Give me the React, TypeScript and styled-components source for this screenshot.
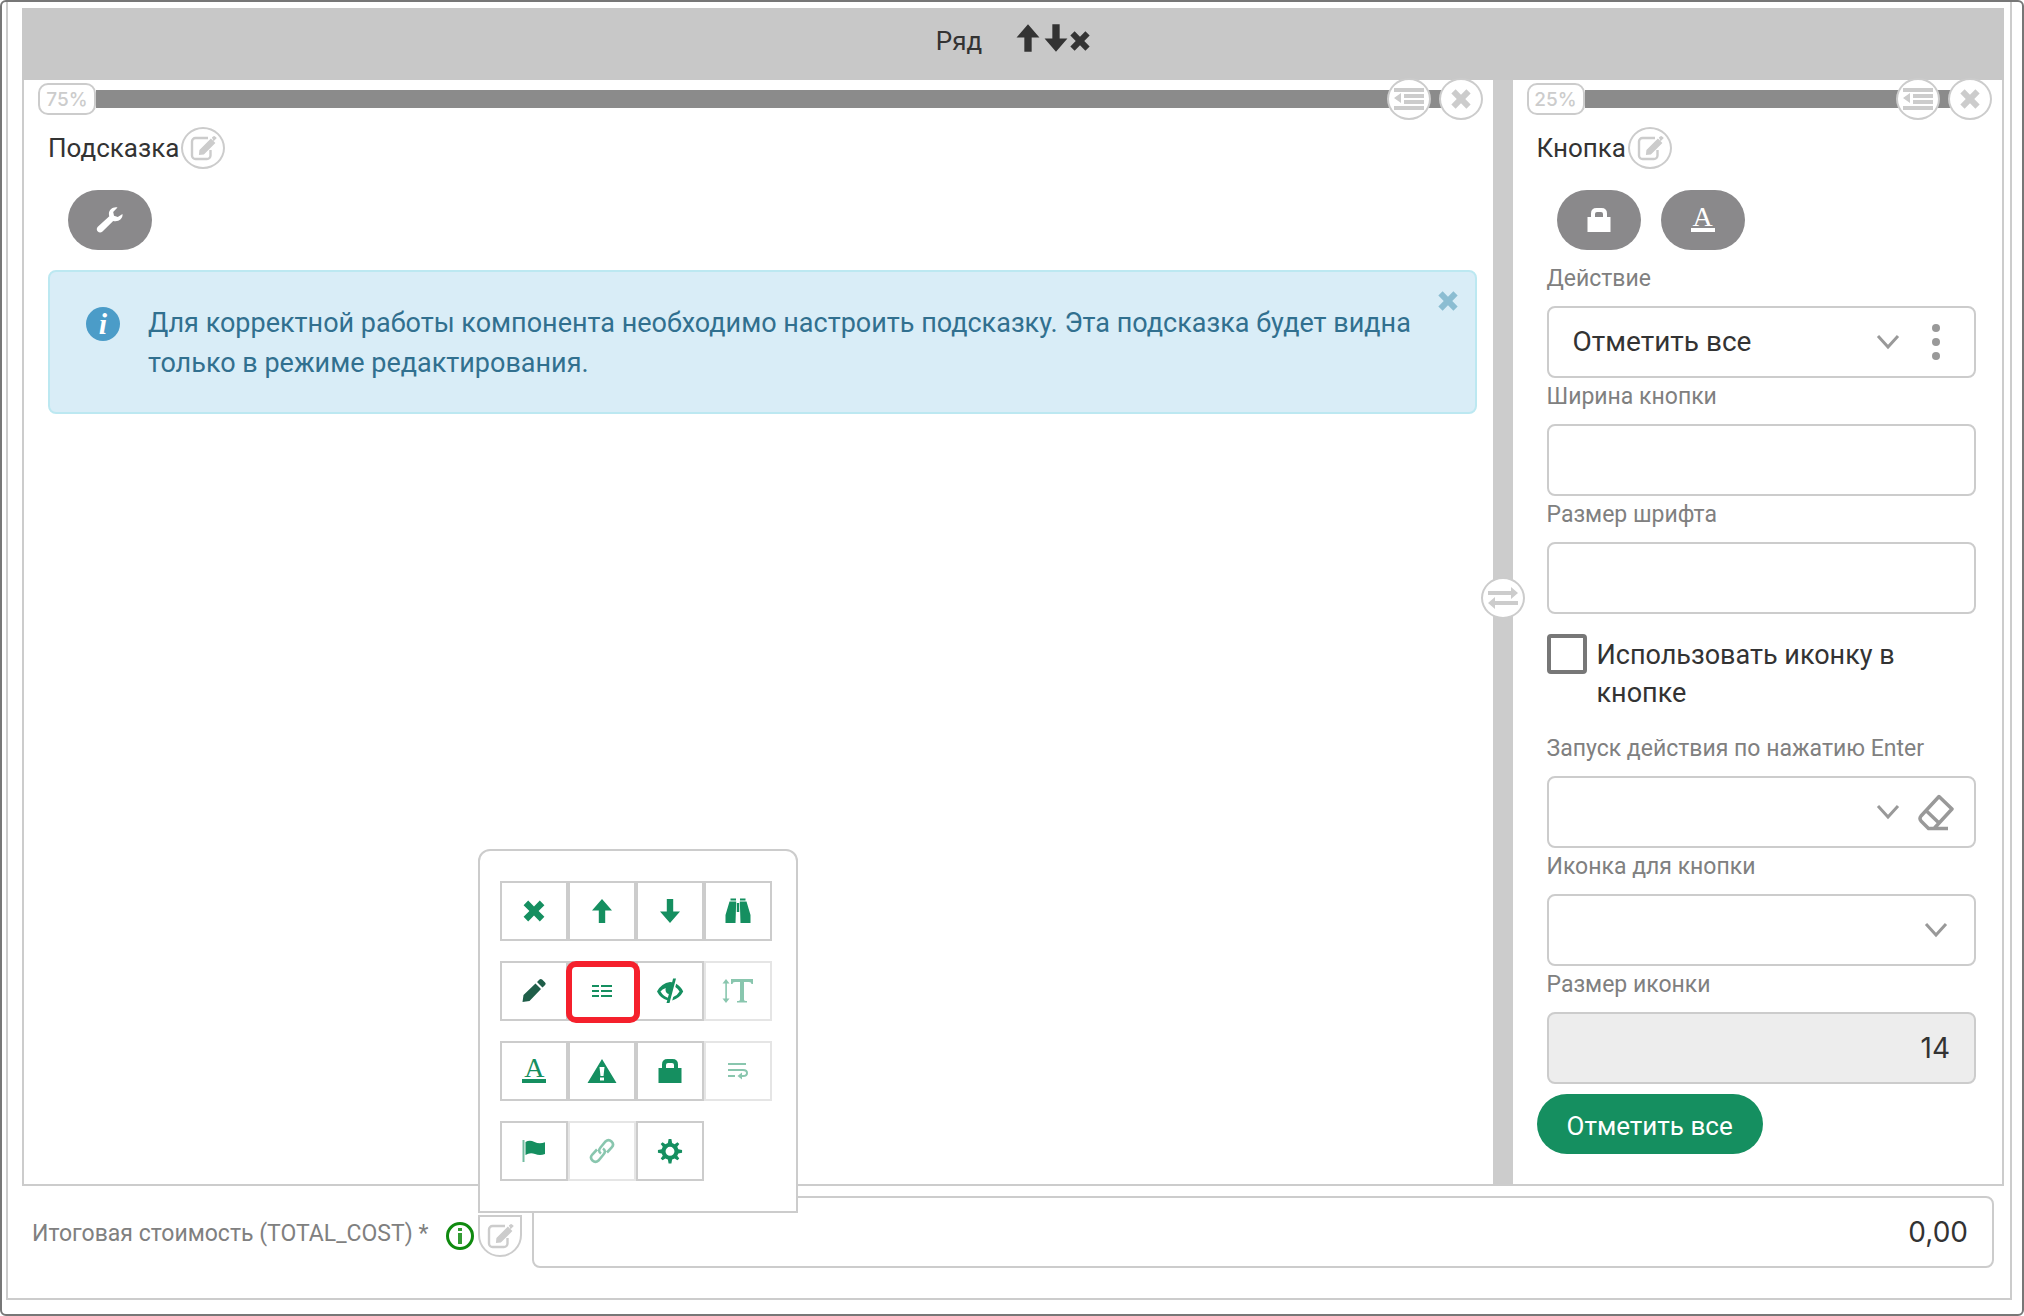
import React, { useState } from "react";
import styled, { createGlobalStyle, css } from "styled-components";

const GREEN = "#158f60";
const GREY = "#cccccc";

const GlobalStyle = createGlobalStyle`
  *, *::before, *::after { box-sizing: border-box; }
  body {
    margin: 0;
    background: #fff;
    color: #333;
    font-family: Roboto, "Liberation Sans", sans-serif;
    font-size: 26px;
    line-height: 38px;
  }
  button, input, select { font: inherit; color: inherit; margin: 0; }
  button { padding: 0; border: 0; background: none; cursor: pointer; }
  svg { display: block; flex: none; }
`;

const Page = styled.main`
  min-height: 100vh;
  border: 2px solid #777;
  border-radius: 6px;
  padding: 0 10px 14px 4px;
`;

const Frame = styled.div`
  border: 2px solid ${GREY};
  border-top: 0;
  padding: 6px 6px 30px 14px;
`;

const RowHeader = styled.header`
  display: flex;
  justify-content: center;
  align-items: center;
  gap: 32px;
  height: 72px;
  padding-bottom: 6px;
  background: #c8c8c8;
`;

const RowTitle = styled.h2`
  margin: 0;
  font-size: 26px;
  font-weight: 400;
`;

const HeaderActions = styled.div`
  display: flex;
  align-items: flex-end;
  padding-bottom: 6px;
`;

const HeaderButton = styled.button<{ $narrow?: boolean }>`
  display: flex;
  justify-content: center;
  width: ${(p) => (p.$narrow ? "20px" : "28px")};
`;

const BareButton = styled.button`
  display: grid;
  place-items: center;
`;

const RowBody = styled.div`
  display: grid;
  grid-template-columns: minmax(0, 3fr) 20px minmax(0, 1fr);
  border: 2px solid ${GREY};
  border-top: 0;
`;

const Column = styled.section`
  padding-bottom: 30px;
`;

const ColumnBar = styled.div`
  position: relative;
  display: flex;
  align-items: center;
  margin-top: -2px;
  padding: 0 10px 0 14px;
`;

const Percent = styled.span`
  min-width: 58px;
  height: 32px;
  border: 2px solid ${GREY};
  border-radius: 10px;
  color: ${GREY};
  font-family: Inter, sans-serif;
  font-size: 19px;
  font-weight: 500;
  line-height: 29px;
  text-align: center;
`;

const Track = styled.span<{ $short?: boolean }>`
  flex: ${(p) => (p.$short ? "0 0 20px" : "1")};
  height: 18px;
  margin: 0 -6px 0 ${(p) => (p.$short ? "-6px" : "0")};
  background: #8b8b8b;
`;

const RoundButton = styled.button<{ $attached?: boolean }>`
  position: relative;
  display: grid;
  place-items: center;
  flex: none;
  width: 44px;
  height: 42px;
  border: 2px solid ${GREY};
  border-radius: ${(p) => (p.$attached ? "0 0 22px 22px" : "50%")};
  background: #fff;
  color: ${GREY};
`;

const Splitter = styled.div`
  position: relative;
  background: ${GREY};
`;

const SplitterHandle = styled.div`
  position: absolute;
  top: 45%;
  left: 50%;
  transform: translateX(-50%);
`;

const Content = styled.div`
  padding: 6px 16px 0 24px;
`;

const TitleRow = styled.div`
  display: flex;
  align-items: center;
  gap: 2px;
  height: 44px;
`;

const Title = styled.h3`
  margin: 0;
  font-size: 26px;
  font-weight: 400;
`;

const Tools = styled.div`
  display: flex;
  gap: 20px;
  padding: 20px;
`;

const ToolButton = styled.button`
  display: grid;
  place-items: center;
  width: 84px;
  height: 60px;
  border-radius: 30px;
  background: #8a898b;
  color: #fff;
`;

const Alert = styled.div`
  display: grid;
  grid-template-columns: 34px minmax(0, 1fr) 26px;
  column-gap: 28px;
  padding: 31px 14px 29px 36px;
  border: 2px solid #bce8f1;
  border-radius: 8px;
  background: #d9edf7;
  color: #31708f;
  font-size: 27px;
  line-height: 40px;
`;

const AlertText = styled.p`
  margin: 0 -12px 0 0;
`;

const InfoMark = styled.span`
  display: grid;
  place-items: center;
  width: 34px;
  height: 34px;
  margin-top: 4px;
  border-radius: 50%;
  background: #4b9cc8;
  color: #fff;
  font: italic 700 30px/34px "Liberation Serif", serif;
`;

const AlertClose = styled(BareButton)`
  align-self: start;
  margin-top: -15px;
  color: #8bbdd2;
`;

const Fields = styled.div`
  padding: 10px;
  margin-top: -20px;
`;

const Field = styled.div`
  display: flex;
  flex-direction: column;
`;

const FieldLabel = styled.label`
  padding-top: 2px;
  height: 46px;
  line-height: 34px;
  font-size: 23px;
  color: #808080;
`;

const box = css`
  height: 72px;
  border: 2px solid ${GREY};
  border-radius: 8px;
  background: #fff;
  font-size: 28px;
`;

const TextBox = styled.input`
  ${box}
  width: 100%;
  min-width: 0;
  padding: 0 24px;
  font-family: Inter, sans-serif;
  text-align: right;
  &:disabled { background: #ededed; color: #333; opacity: 1; }
`;

const SelectBox = styled.div`
  ${box}
  display: flex;
  align-items: center;
  padding-right: 14px;
`;

const Select = styled.select`
  flex: 1;
  min-width: 0;
  height: 100%;
  padding: 0 0 0 24px;
  border: 0;
  background: transparent;
  appearance: none;
  font-size: 28px;
`;

const Slot = styled.span`
  display: grid;
  place-items: center;
  width: 48px;
  color: #999;
  pointer-events: none;
`;

const SlotButton = styled(BareButton)`
  width: 48px;
  height: 48px;
  color: #999;
`;

const CheckRow = styled.div`
  display: grid;
  grid-template-columns: 40px minmax(0, 1fr);
  column-gap: 10px;
  align-items: start;
  padding: 20px 0 18px;
`;

const CheckLabel = styled.label`
  padding-top: 2px;
  font-size: 27px;
`;

const Checkbox = styled.input`
  appearance: none;
  width: 40px;
  height: 40px;
  margin: 0;
  border: 4px solid #777;
  border-radius: 4px;
  &:checked { background: ${GREEN}; }
`;

const PrimaryButton = styled.button`
  height: 60px;
  padding: 4px 30px 0;
  border-radius: 30px;
  background: ${GREEN};
  color: #fff;
  font-size: 26px;
`;

const TotalRow = styled.div`
  display: flex;
  align-items: center;
  gap: 10px;
  padding: 10px 10px 0 10px;
`;

const TotalLabel = styled.label`
  flex: none;
  padding-top: 4px;
  margin-right: 8px;
  font-size: 23px;
  color: #808080;
`;

const TotalTools = styled.div`
  display: flex;
  align-items: center;
  gap: 4px;
  padding-top: 8px;
  color: #0f8a0f;
`;

const PopupAnchor = styled.div`
  position: relative;
`;

const Popup = styled.div`
  position: absolute;
  z-index: 1;
  left: 0;
  bottom: calc(100% + 2px);
  display: grid;
  grid-template-columns: repeat(4, 68px);
  row-gap: 20px;
  width: 320px;
  padding: 30px 20px;
  border: 2px solid ${GREY};
  border-radius: 12px 12px 0 0;
  background: #fff;
`;

const PopupButton = styled.button<{ $dark?: boolean; $marked?: boolean }>`
  position: relative;
  display: grid;
  place-items: center;
  height: 60px;
  border: 2px solid ${GREY};
  background: #fff;
  color: ${(p) => (p.$dark ? "#1f5e49" : GREEN)};
  &:disabled { opacity: 0.5; cursor: default; }
  ${(p) =>
    p.$marked &&
    css`
      z-index: 1;
      &::after {
        content: "";
        position: absolute;
        inset: -2px -6px -4px -4px;
        border: 6px solid #f5202c;
        border-radius: 10px;
      }
    `}
`;

const TextColor = styled.span`
  width: 24px;
  height: 24px;
  border-bottom: 4px solid currentColor;
  font: 400 28px/18px "Liberation Serif", serif;
  text-align: center;
`;

type GlyphProps = { size?: number; children: React.ReactNode };
const Glyph = ({ size = 28, children }: GlyphProps) => (
  <svg width={size} height={size} viewBox="0 0 28 28" fill="currentColor" aria-hidden="true">
    {children}
  </svg>
);

const Cross = ({ size = 28 }: { size?: number }) => (
  <Glyph size={size}>
    <path d="M8.200 3.600 14 9.400l5.800-5.800 4.600 4.600L18.600 14l5.800 5.800-4.600 4.600L14 18.600l-5.800 5.800-4.600-4.600L9.400 14 3.600 8.200z" />
  </Glyph>
);
const ArrowUp = ({ size = 28 }: { size?: number }) => (
  <Glyph size={size}><path d="M14 2l10 11.500H17.200V26h-6.400V13.500H4z" /></Glyph>
);
const ArrowDown = ({ size = 28 }: { size?: number }) => (
  <Glyph size={size}><path d="M14 26 4 14.500h6.800V2h6.400v12.500H24z" /></Glyph>
);
const Outdent = () => (
  <svg width="32" height="24" viewBox="0 0 32 24" fill="currentColor" aria-hidden="true">
    <path d="M1 1h30v4H1zM11 7h20v4H11zM11 13h20v4H11zM1 19h30v4H1zM1 11l7-5v10z" />
  </svg>
);
const Edit = () => (
  <Glyph>
    <path
      d="M19 4H6.500A3.500 3.500 0 0 0 3 7.500v14A3.500 3.500 0 0 0 6.500 25H18a3.500 3.500 0 0 0 3.500-3.500V16"
      fill="none" stroke="currentColor" strokeWidth="2.400"
    />
    <path d="M11 15.500 22.500 4l4.500 4.500L15.500 20 10.500 20.500zM23.500 3l1.200-1.200q1-.8 2 0l1.700 1.700-3.200 3.200z" transform="translate(-.6 .6)" />
  </Glyph>
);
const Wrench = () => (
  <Glyph>
    <path d="M26.500 8 21.800 11l-3.800-1.200-.8-3.800L21.500 1.500c-4.300-1-8.600 2-8.600 6.500 0 1 .2 1.600.4 2.300L1.800 20.800c-1.500 1.600-1.200 3.500 0 4.800s3.200 1.400 4.700 0l10.700-10.700c5 1.300 9.900-2 9.300-6.900z" />
  </Glyph>
);
const Lock = () => (
  <Glyph>
    <path d="M2.500 11H6V7.500Q6 2 11.500 2h5Q22 2 22 7.500V11h3.500v15h-23zM10 11h8V8q0-2-2-2h-4q-2 0-2 2z" fillRule="evenodd" />
  </Glyph>
);
const Swap = () => (
  <svg width="30" height="22" viewBox="0 0 30 22" fill="currentColor" aria-hidden="true">
    <path d="M0 4h23V0l7 6-7 6V8H0zM30 18H7v4l-7-6 7-6v4h23z" />
  </svg>
);
const Chevron = () => (
  <svg width="24" height="16" viewBox="0 0 24 16" fill="none" stroke="currentColor" strokeWidth="3" aria-hidden="true">
    <path d="M2 2l10 11L22 2" />
  </svg>
);
const Dots = () => (
  <svg width="10" height="38" viewBox="0 0 10 38" fill="currentColor" aria-hidden="true">
    <circle cx="5" cy="5" r="4" /><circle cx="5" cy="19" r="4" /><circle cx="5" cy="33" r="4" />
  </svg>
);
const Eraser = () => (
  <svg width="38" height="38" viewBox="0 0 38 38" fill="none" stroke="currentColor" strokeWidth="3.500" strokeLinejoin="round" aria-hidden="true">
    <path d="M31 35.500H11.500L4 28q-2-2.500 0-5L22 3.500 35 16 17.500 35M9 17.500 22 30" />
  </svg>
);
const Binoculars = () => (
  <Glyph>
    <path d="M6.500 1.500h5.500v2H6.500zM16 1.500h5.500v2H16zM5.500 4.500h6.700l-.7 21.500H1.500V18zM15.800 4.500h6.700L26.500 18v8H16.500zM12.800 6h2.400v9h-2.400z" />
  </Glyph>
);
const Pencil = () => (
  <Glyph><path d="M2.500 25 3.500 18 15.500 6.500l5.500 5.500L9.500 24zM17 5l2.500-2.500q1.300-1 2.600 0l3 3q1.300 1.300 0 2.600L22.500 10.500z" /></Glyph>
);
const List = () => (
  <svg width="20" height="12" viewBox="0 0 20 12" fill="currentColor" aria-hidden="true">
    <path d="M0 0h7v2H0zM9 0h11v2H9zM0 5h7v2H0zM9 5h11v2H9zM0 10h7v2H0zM9 10h11v2H9z" />
  </svg>
);
const EyeClosed = () => (
  <Glyph>
    <path d="M20 1.500 13.500 26h-3l.8-2.800Q4.500 21.500 1 14.500 5.500 6 14 5q1 0 2.100.2l1-3.700zM12.500 18.500l.3-1.500q-3.300-.8-3.300-4.500 0-.7.300-1.500Q6 12 4.500 14.500 7.500 19.300 11.800 20.800z" fillRule="evenodd" />
    <path d="M20.200 6.800Q24.700 9.200 27.200 14.500q-3.500 6.800-11 9l1-3.500q4.300-1.600 6.300-5.500-1.500-2.800-4.200-4.500z" />
  </Glyph>
);
const TextHeight = () => (
  <svg width="32" height="26" viewBox="0 0 32 26" fill="currentColor" aria-hidden="true">
    <path d="M3.300 4h1.600v18H3.300zM4 1l3.500 4.500h-7zM4 25l-3.500-4.500h7zM9 1h22v5h-1.500q0-2-2.500-2h-5v17.500q0 1.500 3 1.500v1.500H15V23q3 0 3-1.500V4h-5q-2.500 0-2.500 2H9z" />
  </svg>
);
const Warning = () => (
  <svg width="30" height="26" viewBox="0 0 30 26" fill="currentColor" aria-hidden="true">
    <path d="M15 1l14.500 24H.5zM12.500 9l1 9h3l1-9zM13 19.500v3h4v-3z" fillRule="evenodd" />
  </svg>
);
const Wrap = () => (
  <svg width="22" height="18" viewBox="0 0 22 18" fill="none" stroke="currentColor" strokeWidth="2" aria-hidden="true">
    <path d="M1 2h18M1 8h15q4 0 4 3t-4 3h-4M1 14h7" />
    <path d="M15 10.500v7L10.500 14z" fill="currentColor" stroke="none" />
  </svg>
);
const Flag = () => (
  <Glyph>
    <path d="M2.500 3h2v22h-2z" opacity=".6" />
    <path d="M5.500 5q4-2.500 9 0t10.500.2V17q-5 2-10 0t-9.500 1z" />
  </Glyph>
);
const Link = () => (
  <Glyph>
    <path
      d="M13 16.500q-3.500-2.500-.5-6l5-6q3-2.800 6 0t.2 6l-4.700 5M15 11.500q3.500 2.500.5 6l-5 6q-3 2.800-6 0t-.2-6l4.700-5"
      fill="none" stroke="currentColor" strokeWidth="2.600"
    />
  </Glyph>
);
const Cog = () => (
  <Glyph size={26}>
    <path d="M12.500 1h3l.8 4.500 2.700 1.200L22 4.500l2 2L21.800 9.500 23 12l4 .8v3l-4 .8-1.200 2.600L24 22l-2 2-3-2-2.700 1.200-.8 4.300h-3l-.8-4.300L9 22l-3 2-2-2 2.200-2.800L5 16.600l-4-.8v-3l4-.8 1.200-2.500L4 6.500l2-2 3 2.200 2.700-1.200zM14 9.500a4.800 4.800 0 1 0 0 9.600 4.800 4.800 0 0 0 0-9.600z" fillRule="evenodd" />
  </Glyph>
);
const InfoCircle = () => (
  <svg width="28" height="28" viewBox="0 0 28 28" aria-hidden="true">
    <circle cx="14" cy="14" r="12.500" fill="none" stroke="currentColor" strokeWidth="3" />
    <path d="M12 6h4v3h-4zM12 11h4v11h-4z" fill="currentColor" opacity=".85" />
  </svg>
);

type ColumnHeadProps = { percent: string };
const ColumnHead = ({ percent }: ColumnHeadProps) => (
  <ColumnBar>
    <Percent>{percent}</Percent>
    <Track />
    <RoundButton type="button" aria-label="Отступ"><Outdent /></RoundButton>
    <Track $short />
    <RoundButton type="button" aria-label="Удалить колонку"><Cross size={26} /></RoundButton>
  </ColumnBar>
);

type PopupAction = { label: string; icon: React.ReactNode; disabled?: boolean; dark?: boolean; marked?: boolean };
const popupActions: PopupAction[] = [
  { label: "Удалить", icon: <Cross /> },
  { label: "Вверх", icon: <ArrowUp /> },
  { label: "Вниз", icon: <ArrowDown /> },
  { label: "Найти", icon: <Binoculars /> },
  { label: "Редактировать", icon: <Pencil />, dark: true },
  { label: "Список", icon: <List />, marked: true },
  { label: "Скрыть", icon: <EyeClosed /> },
  { label: "Высота текста", icon: <TextHeight />, disabled: true },
  { label: "Цвет текста", icon: <TextColor>A</TextColor> },
  { label: "Предупреждение", icon: <Warning /> },
  { label: "Блокировка", icon: <Lock /> },
  { label: "Перенос", icon: <Wrap />, disabled: true },
  { label: "Флаг", icon: <Flag /> },
  { label: "Ссылка", icon: <Link />, disabled: true },
  { label: "Настройки", icon: <Cog /> },
];

export default function App() {
  const [useIcon, setUseIcon] = useState(false);
  return (
    <>
      <GlobalStyle />
      <Page>
        <Frame>
          <RowHeader>
            <RowTitle>Ряд</RowTitle>
            <HeaderActions>
              <HeaderButton type="button" aria-label="Ряд вверх"><ArrowUp size={32} /></HeaderButton>
              <HeaderButton type="button" aria-label="Ряд вниз"><ArrowDown size={32} /></HeaderButton>
              <HeaderButton $narrow type="button" aria-label="Удалить ряд"><Cross size={26} /></HeaderButton>
            </HeaderActions>
          </RowHeader>
          <RowBody>
            <Column>
              <ColumnHead percent="75%" />
              <Content>
                <TitleRow>
                  <Title>Подсказка</Title>
                  <RoundButton type="button" aria-label="Изменить подсказку"><Edit /></RoundButton>
                </TitleRow>
                <Tools>
                  <ToolButton type="button" aria-label="Настроить"><Wrench /></ToolButton>
                </Tools>
                <Alert role="note">
                  <InfoMark>i</InfoMark>
                  <AlertText>
                    Для корректной работы компонента необходимо настроить подсказку. Эта подсказка будет видна
                    только в режиме редактирования.
                  </AlertText>
                  <AlertClose type="button" aria-label="Закрыть"><Cross size={26} /></AlertClose>
                </Alert>
              </Content>
            </Column>
            <Splitter>
              <SplitterHandle>
                <RoundButton type="button" aria-label="Поменять местами"><Swap /></RoundButton>
              </SplitterHandle>
            </Splitter>
            <Column>
              <ColumnHead percent="25%" />
              <Content>
                <TitleRow>
                  <Title>Кнопка</Title>
                  <RoundButton type="button" aria-label="Изменить кнопку"><Edit /></RoundButton>
                </TitleRow>
                <Tools>
                  <ToolButton type="button" aria-label="Блокировка"><Lock /></ToolButton>
                  <ToolButton type="button" aria-label="Цвет текста"><TextColor>A</TextColor></ToolButton>
                </Tools>
                <Fields>
                  <Field>
                    <FieldLabel htmlFor="action">Действие</FieldLabel>
                    <SelectBox>
                      <Select id="action" defaultValue="all"><option value="all">Отметить все</option></Select>
                      <Slot><Chevron /></Slot>
                      <SlotButton type="button" aria-label="Ещё"><Dots /></SlotButton>
                    </SelectBox>
                  </Field>
                  <Field>
                    <FieldLabel htmlFor="width">Ширина кнопки</FieldLabel>
                    <TextBox id="width" type="text" />
                  </Field>
                  <Field>
                    <FieldLabel htmlFor="font-size">Размер шрифта</FieldLabel>
                    <TextBox id="font-size" type="text" />
                  </Field>
                  <CheckRow>
                    <Checkbox id="use-icon" type="checkbox" checked={useIcon} onChange={() => setUseIcon(!useIcon)} />
                    <CheckLabel htmlFor="use-icon">Использовать иконку в кнопке</CheckLabel>
                  </CheckRow>
                  <Field>
                    <FieldLabel htmlFor="enter">Запуск действия по нажатию Enter</FieldLabel>
                    <SelectBox>
                      <Select id="enter" defaultValue=""><option value="" /></Select>
                      <Slot><Chevron /></Slot>
                      <SlotButton type="button" aria-label="Очистить"><Eraser /></SlotButton>
                    </SelectBox>
                  </Field>
                  <Field>
                    <FieldLabel htmlFor="icon">Иконка для кнопки</FieldLabel>
                    <SelectBox>
                      <Select id="icon" defaultValue=""><option value="" /></Select>
                      <Slot><Chevron /></Slot>
                    </SelectBox>
                  </Field>
                  <Field>
                    <FieldLabel htmlFor="icon-size">Размер иконки</FieldLabel>
                    <TextBox id="icon-size" type="text" defaultValue="14" disabled />
                  </Field>
                </Fields>
                <PrimaryButton type="button">Отметить все</PrimaryButton>
              </Content>
            </Column>
          </RowBody>
          <TotalRow>
            <TotalLabel htmlFor="total">Итоговая стоимость (TOTAL_COST) *</TotalLabel>
            <TotalTools>
              <InfoCircle />
              <PopupAnchor>
                <RoundButton $attached type="button" aria-label="Изменить поле"><Edit /></RoundButton>
                <Popup>
                  {popupActions.map((a) => (
                    <PopupButton key={a.label} type="button" aria-label={a.label} disabled={a.disabled} $dark={a.dark} $marked={a.marked}>
                      {a.icon}
                    </PopupButton>
                  ))}
                </Popup>
              </PopupAnchor>
            </TotalTools>
            <TextBox id="total" type="text" defaultValue="0,00" />
          </TotalRow>
        </Frame>
      </Page>
    </>
  );
}
